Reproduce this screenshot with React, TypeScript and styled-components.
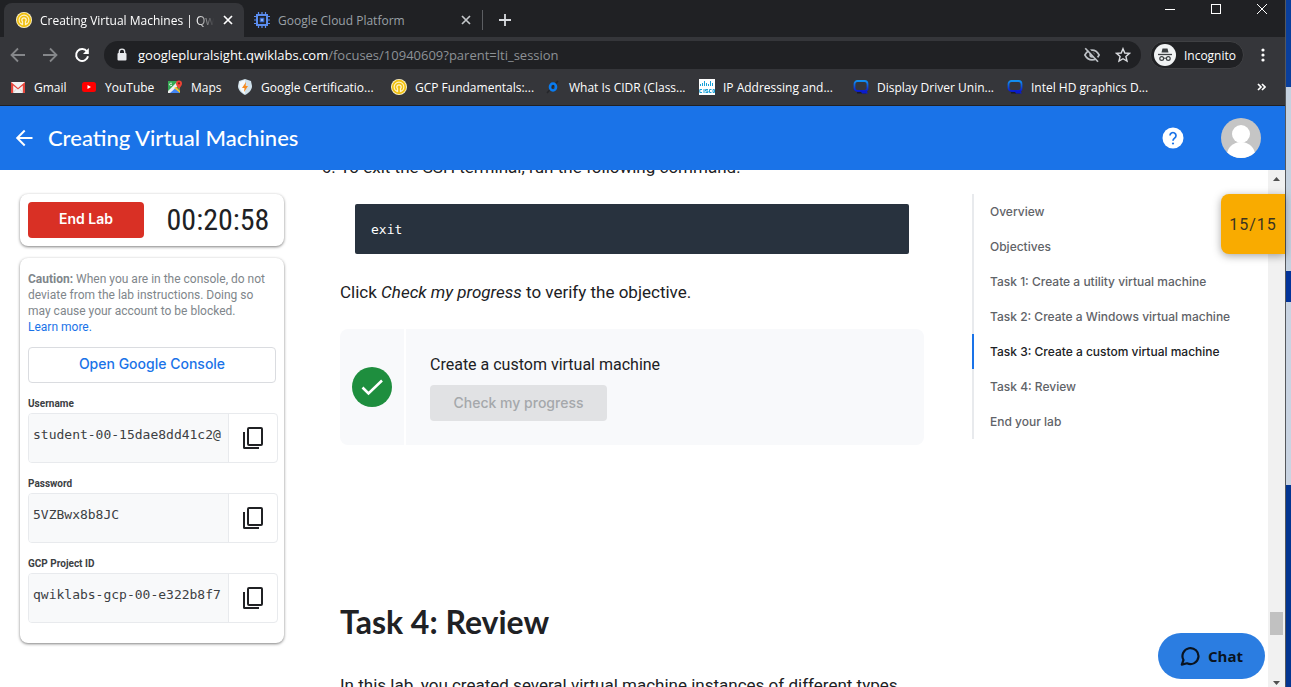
import React from "react";
import styled, { createGlobalStyle } from "styled-components";

const Global = createGlobalStyle`
  *{box-sizing:border-box}
  html,body{margin:0;height:100%;overflow:hidden}
  #root{height:100%}
  button{border:0;background:none;padding:0;font:inherit;color:inherit;display:flex;align-items:center;justify-content:center}
  a{color:inherit;text-decoration:none}
`;

const chromeFont = `"Open Sans","Noto Sans",sans-serif`;
const titleFont = `Lato,sans-serif`;
const labelFont = `Inter,sans-serif`;
const bodyFont = `Roboto,sans-serif`;

const Screen = styled.div`
  display: grid;
  grid-template-columns: minmax(0, 1fr) 6px;
  height: 100vh;
`;
const Desktop = styled.div`
  border-left: 1px solid #55585c;
  background: linear-gradient(#0a3f9c 87px, #c5d2e0 87px 271px, #03349a 271px 302px, #c9d4e2 302px 485px, #033591 485px);
`;
const Browser = styled.div`
  display: flex;
  flex-direction: column;
  min-height: 0;
  position: relative;
  background: #35363a;
  font-family: ${chromeFont};
  font-size: 12px;
  color: #fff;
`;
const TabStrip = styled.div`
  display: flex;
  background: #202124;
  height: 37px;
  padding: 3px 0 0 4px;
`;
const Tab = styled.div<{ $active?: boolean }>`
  display: flex;
  align-items: center;
  gap: 8px;
  width: ${(p) => (p.$active ? 240 : 238)}px;
  height: 34px;
  padding: 0 10px 0 ${(p) => (p.$active ? 12 : 10)}px;
  border-radius: 8px 8px 0 0;
  background: ${(p) => (p.$active ? "#35363a" : "transparent")};
  color: ${(p) => (p.$active ? "#fff" : "#9aa0a6")};
`;
const TabTitle = styled.span<{ $fade?: boolean }>`
  flex: 1;
  min-width: 0;
  overflow: hidden;
  white-space: nowrap;
  mask-image: ${(p) => (p.$fade ? "linear-gradient(90deg,#000 90%,transparent)" : "none")};
`;
const IconButton = styled.button`
  width: 12px;
  height: 34px;
`;
const NewTab = styled.button`
  && {
    width: 45px;
    height: 20px;
    margin-top: 7px;
    border-left: 1px solid #5c5e62;
  }
`;
const WindowButtons = styled.div`
  display: flex;
  margin: -3px 0 0 auto;
`;
const WindowButton = styled.button`
  width: 46px;
  height: 18px;
`;
const Toolbar = styled.div`
  display: flex;
  align-items: center;
  height: 36px;
  padding-right: 9px;
`;
const NavButton = styled.button`
  width: 32px;
  height: 28px;
  &:first-child { margin-left: 2px; }
`;
const Omnibox = styled.div`
  flex: 1;
  display: flex;
  align-items: center;
  gap: 14px;
  height: 28px;
  margin-left: 6px;
  padding: 0 10px 0 12px;
  border-radius: 14px;
  background: #202124;
  font-size: 13px;
`;
const Address = styled.span`
  flex: 1;
  margin-left: -4px;
  white-space: nowrap;
  span { color: #8d9196; }
`;
const Incognito = styled.button`
  && {
    gap: 8px;
    height: 28px;
    margin: 0 6px 0 9px;
    padding: 0 7px 0 3px;
    border: 1px solid #3f4043;
    border-radius: 14px;
    background: #202124;
  }
`;
const MenuButton = styled.button`
  width: 26px;
  height: 28px;
`;
const Bookmarks = styled.nav`
  display: flex;
  align-items: center;
  height: 33px;
  padding: 0 19px 4px 10px;
  border-bottom: 1px solid #202124;
`;
const Bookmark = styled.a<{ $w: number }>`
  display: flex;
  align-items: center;
  gap: 8px;
  width: ${(p) => p.$w}px;
  white-space: nowrap;
  svg { flex: none; }
`;
const More = styled.button`
  margin-left: auto;
`;

const Header = styled.header`
  display: flex;
  align-items: center;
  flex: none;
  height: 64px;
  padding: 0 24px 0 12px;
  background: #1a73e8;
  position: relative;
`;
const PageTitle = styled.h1`
  flex: 1;
  margin: 0 0 0 12px;
  font: 500 22px/28px ${titleFont};
`;
const HelpButton = styled.button`
  margin-right: 36px;
`;
const Viewport = styled.div`
  flex: 1;
  display: flex;
  min-height: 0;
  background: #fff;
`;
const Page = styled.div`
  flex: 1;
  display: grid;
  grid-template-columns: 264px minmax(0, 1fr) 280px;
  align-items: start;
  min-width: 0;
  overflow: hidden;
  padding: 24px 16px 0 20px;
  font-family: ${bodyFont};
  color: #202124;
`;
const Side = styled.aside`
  display: flex;
  flex-direction: column;
  gap: 12px;
`;
const Panel = styled.section`
  padding: 8px;
  border-radius: 8px;
  background: #fff;
  box-shadow: 0 1px 3px rgba(0, 0, 0, 0.5);
`;
const TimerPanel = styled(Panel)`
  display: flex;
  align-items: center;
  height: 52px;
`;
const EndLab = styled.button`
  && {
    width: 116px;
    height: 36px;
    padding-bottom: 2px;
    border-radius: 4px;
    background: #d93025;
    color: #fff;
    font: 600 14px/20px ${labelFont};
  }
`;
const Timer = styled.time`
  flex: 1;
  padding-left: 16px;
  text-align: center;
  font: 400 30px/36px "Liberation Sans Narrow", "Roboto Condensed", Roboto, sans-serif;
`;
const LabPanel = styled(Panel)`
  padding: 13px 8px 20px;
`;
const Caution = styled.p`
  margin: 0 0 12px;
  font-size: 12px;
  line-height: 16px;
  color: #80868b;
  a { display: block; color: #1a73e8; }
`;
const ConsoleButton = styled.button`
  && {
    width: 100%;
    height: 36px;
    margin-bottom: 13px;
    padding-bottom: 2px;
    border: 1px solid #dadce0;
    border-radius: 4px;
    color: #1a73e8;
    font: 500 14px/20px ${labelFont};
  }
`;
const Field = styled.div`
  width: 250px;
  & + & { margin-top: 13px; }
  label { display: block; height: 17px; font: 700 10px/16px ${bodyFont}; color: #3c4043; }
`;
const FieldBox = styled.div`
  display: flex;
  height: 50px;
  border: 1px solid #e8eaed;
  border-radius: 4px;
  overflow: hidden;
  input {
    flex: 1;
    min-width: 0;
    padding: 0 0 6px 4px;
    border: 0;
    border-right: 1px solid #e8eaed;
    background: #f8f9fa;
    color: #3c4043;
    font: 13px/20px "DejaVu Sans Mono", monospace;
  }
  button { width: 48px; }
`;

const Lesson = styled.main`
  margin: -40px 48px 0 56px;
  font-size: 17px;
  line-height: 26px;
  white-space: nowrap;
  p { margin: 0; }
`;
const Steps = styled.ol`
  margin: 0;
  padding: 0;
`;
const Code = styled.pre`
  height: 50px;
  margin: 24px 15px 25px;
  padding: 0 16px;
  border-radius: 2px;
  background: #28323e;
  color: #fff;
  font: 13px/52px "DejaVu Sans Mono", monospace;
`;
const Objective = styled.section`
  display: grid;
  grid-template-columns: 64px minmax(0, 1fr);
  gap: 2px;
  height: 116px;
  margin: 24px 0 159px;
  border-radius: 8px;
  overflow: hidden;
  font-size: 16px;
`;
const Status = styled.div`
  display: grid;
  place-items: center;
  background: #f8f9fb;
`;
const Check = styled.div`
  padding: 23px 24px;
  background: #f8f9fb;
  button {
    width: 177px;
    height: 36px;
    margin-top: 7px;
    border-radius: 4px;
    background: #e1e2e4;
    color: #a5a8ab;
    font: 500 14px/20px ${labelFont};
  }
`;
const Heading = styled.h2`
  margin: 0 0 32px;
  font: 700 32px/36px ${titleFont};
`;
const Toc = styled.nav`
  display: flex;
  flex-direction: column;
`;
const TocLink = styled.a<{ $active?: boolean }>`
  border-left: 2px solid ${(p) => (p.$active ? "#1a73e8" : "#e8eaed")};
  padding-left: 16px;
  font: 500 12px/35px ${labelFont};
  color: ${(p) => (p.$active ? "#202124" : "#5f6368")};
`;
const Scrollbar = styled.div`
  display: flex;
  flex-direction: column;
  align-items: center;
  justify-content: space-between;
  width: 17px;
  background: #f1f1f1;
`;
const ScrollEnd = styled.div`
  display: flex;
  flex-direction: column;
  align-items: center;
  gap: 42px;
`;
const Thumb = styled.div`
  width: 13px;
  height: 23px;
  background: #c1c1c1;
`;
const Score = styled.div`
  position: absolute;
  right: 0;
  top: 194px;
  width: 64px;
  height: 60px;
  border-radius: 8px 0 0 8px;
  background: #f9ab00;
  box-shadow: 0 2px 8px rgba(0, 0, 0, 0.35);
  color: #3c3420;
  font: 16px/62px ${bodyFont};
  letter-spacing: 1px;
  text-align: center;
`;
const Chat = styled.button`
  && {
    position: absolute;
    right: 20px;
    bottom: 8px;
    gap: 8px;
    width: 107px;
    height: 46px;
    border-radius: 23px;
    background: #2b7de1;
    color: #0a1420;
    font: 700 15px/20px ${chromeFont};
  }
`;

const Close = ({ c }: { c: string }) => (
  <svg width="10" height="10" viewBox="0 0 10 10" stroke={c} strokeWidth="1.7"><path d="M1 1l8 8M9 1L1 9" /></svg>
);
const QwikIcon = () => (
  <svg width="16" height="16" viewBox="0 0 16 16" fill="none">
    <circle cx="8" cy="8" r="8" fill="#fff3c8" />
    <circle cx="8" cy="8" r="6.3" stroke="#f0c010" strokeWidth="1.7" />
    <path d="M5.7 10.8A3.6 3.6 0 1 1 10.3 10.8" stroke="#f0c010" strokeWidth="1.5" />
    <path d="M8 7.5V14" stroke="#f0c010" strokeWidth="1.7" /><circle cx="8" cy="8" r="1.5" fill="#f0c010" />
  </svg>
);
const ChipIcon = () => (
  <svg width="16" height="16" viewBox="0 0 16 16" fill="none" stroke="#5b8def">
    <path d="M4.5 0v3M8 0v3M11.500 0v3M4.500 13v3M8 13v3M11.500 13v3M0 4.500h3M0 8h3M0 11.500h3M13 4.500h3M13 8h3M13 11.500h3" strokeWidth="1.2" />
    <rect x="3" y="3" width="10" height="10" strokeWidth="2" /><rect x="6.2" y="6.2" width="3.6" height="3.6" fill="#8ab4f8" stroke="#3367d6" />
  </svg>
);
const GmailIcon = () => (
  <svg width="16" height="16" viewBox="0 0 16 16"><path d="M1 3h14v11H1z" fill="#f2f2f2" /><path d="M1 14V3l7 6 7-6v11h-2.200V6.500L8 10.500 3.200 6.500V14z" fill="#e5443a" /><path d="M3 14l4-5M13 14L9 9" stroke="#ccc" strokeWidth=".7" /></svg>
);
const YoutubeIcon = () => (
  <svg width="16" height="16" viewBox="0 0 16 16"><rect x="1" y="3" width="14" height="10" rx="2.500" fill="#f00" /><path d="M6.500 6v4L10 8z" fill="#fff" /></svg>
);
const MapsIcon = () => (
  <svg width="16" height="16" viewBox="0 0 16 16">
    <path d="M1 2h12v12H1z" fill="#34a853" /><path d="M1 14l6-6 6 6z" fill="#4285f4" /><path d="M1 12L11 2h2v3L3 14H1z" fill="#eee" /><path d="M9 8l4 4v2L7 9z" fill="#fbc02d" />
    <path d="M12 11c-.4-3-3-3.600-3-6.500a3 3 0 0 1 6 0c0 2.900-2.600 3.500-3 6.500z" fill="#ea4335" /><circle cx="12" cy="4.300" r="1.100" fill="#7d1d17" />
    <path d="M5 4.800a1.300 1.300 0 1 0-.2 1.500H3.900" fill="none" stroke="#fff" strokeWidth=".8" />
  </svg>
);
const CertIcon = () => (
  <svg width="16" height="16" viewBox="0 0 16 16"><path d="M8 0l6 2 1 5c0 4-3 7-7 9-4-2-7-5-7-9l1-5z" fill="#cfe0ea" /><path d="M8 1v14c-3-2-5.500-4-5.500-8V3z" fill="#f5f9fb" /><path d="M9 3L5 9h2.500L7 13l4-6H8.600z" fill="#f68b1f" /></svg>
);
const CidrIcon = () => (
  <svg width="16" height="16" viewBox="0 0 16 16"><path d="M2 14L13 2" stroke="#25262a" strokeWidth="1.500" /><ellipse cx="8" cy="8" rx="3" ry="3.500" fill="none" stroke="#0a7cf0" strokeWidth="2.600" /></svg>
);
const CiscoIcon = () => (
  <svg width="16" height="16" viewBox="0 0 16 16" fill="none" stroke="#1ba0d7">
    <path d="M0 0h16v16H0z" fill="#fff" stroke="none" /><path d="M1.500 5v2M3.500 4v3M5.500 2v5M7.500 4v3M9.500 5v2M11.500 2v5M13.500 4v3" />
    <path d="M3 10.500H.8v3H3M5 10v4M9 10.500H6.500V12H9v1.500H6.500M12.500 10.500h-2v3h2M14 10.500h1.500v3H14z" />
  </svg>
);
const DriverIcon = () => (
  <svg width="16" height="16" viewBox="0 0 16 16" fill="none">
    <defs><linearGradient id="drv" x1="0" y1="0" x2="0" y2="1"><stop stopColor="#1290f0" /><stop offset="1" stopColor="#0a1ccc" /></linearGradient></defs>
    <path d="M4 13.800h9" stroke="#1b1c2a" strokeWidth="1.500" />
    <rect x="1.500" y="2" width="13" height="10" rx="3" stroke="url(#drv)" strokeWidth="1.800" /><path d="M8 11.500l1.500 2.300h4.200l-1-2.300" stroke="#0a1ccc" strokeWidth="1.500" />
  </svg>
);
const CopyIcon = () => (
  <svg width="22" height="24" viewBox="0 0 22 24" fill="none" stroke="#202124" strokeWidth="2"><rect x="6" y="2" width="14" height="17" rx="1" /><path d="M2 6v15.500q0 .5.500.5H17" /></svg>
);
const Arrow = ({ c, flip, size = 16 }: { c: string; flip?: boolean; size?: number }) => (
  <svg width={size} height={size} viewBox="0 0 16 16" fill="none" stroke={c} strokeWidth="1.800">
    <path d={flip ? "M1 8h13M8 1.500L14.500 8 8 14.500" : "M15 8H2M8 1.500L1.500 8 8 14.500"} />
  </svg>
);

const bookmarks: [string, number, React.FC][] = [
  ["Gmail", 71, GmailIcon],
  ["YouTube", 86, YoutubeIcon],
  ["Maps", 70, MapsIcon],
  ["Google Certificatio...", 154, CertIcon],
  ["GCP Fundamentals:...", 154, QwikIcon],
  ["What Is CIDR (Class...", 154, CidrIcon],
  ["IP Addressing and...", 154, CiscoIcon],
  ["Display Driver Unin...", 154, DriverIcon],
  ["Intel HD graphics D...", 154, DriverIcon],
];
const fields = [
  ["Username", "student-00-15dae8dd41c2@"],
  ["Password", "5VZBwx8b8JC"],
  ["GCP Project ID", "qwiklabs-gcp-00-e322b8f7"],
];
const sections = [
  "Overview",
  "Objectives",
  "Task 1: Create a utility virtual machine",
  "Task 2: Create a Windows virtual machine",
  "Task 3: Create a custom virtual machine",
  "Task 4: Review",
  "End your lab",
];

export default function App() {
  return (
    <Screen>
      <Global />
      <Browser>
        <TabStrip>
          <Tab $active>
            <QwikIcon />
            <TabTitle $fade>Creating Virtual Machines | Qwikl</TabTitle>
            <IconButton aria-label="Close tab"><Close c="#fff" /></IconButton>
          </Tab>
          <Tab>
            <ChipIcon />
            <TabTitle>Google Cloud Platform</TabTitle>
            <IconButton aria-label="Close tab"><Close c="#c4c7ca" /></IconButton>
          </Tab>
          <NewTab aria-label="New tab">
            <svg width="12" height="12" viewBox="0 0 12 12" stroke="#dadce0" strokeWidth="1.800"><path d="M6 0v12M0 6h12" /></svg>
          </NewTab>
          <WindowButtons>
            <WindowButton aria-label="Minimize"><svg width="10" height="10" stroke="#fff"><path d="M0 5.500h10" /></svg></WindowButton>
            <WindowButton aria-label="Maximize"><svg width="10" height="10" fill="none" stroke="#fff"><rect x=".5" y=".5" width="9" height="9" /></svg></WindowButton>
            <WindowButton aria-label="Close"><svg width="10" height="10" stroke="#fff"><path d="M0 0l10 10M10 0L0 10" /></svg></WindowButton>
          </WindowButtons>
        </TabStrip>
        <Toolbar>
          <NavButton aria-label="Back"><Arrow c="#85878a" /></NavButton>
          <NavButton aria-label="Forward"><Arrow c="#85878a" flip /></NavButton>
          <NavButton aria-label="Reload">
            <svg width="16" height="16" viewBox="0 0 16 16" fill="none" stroke="#fff" strokeWidth="2"><path d="M13 4.500A6 6 0 1 0 14 9.300" /><path d="M14.800 1v6H9z" fill="#fff" stroke="none" /></svg>
          </NavButton>
          <Omnibox>
            <svg width="12" height="14" viewBox="0 0 12 14"><path d="M3.300 6V3.800a2.700 2.700 0 0 1 5.400 0V6" fill="none" stroke="#e8eaed" strokeWidth="1.400" /><rect x="1.500" y="5" width="9" height="7.500" rx="1" fill="#e8eaed" /></svg>
            <Address>googlepluralsight.qwiklabs.com<span>/focuses/10940609?parent=lti_session</span></Address>
            <svg width="18" height="18" viewBox="0 0 24 24" fill="none" stroke="#bdc1c6" strokeWidth="2.200"><path d="M2.500 12Q6 5.500 12 5.500T21.500 12Q18 18.500 12 18.500T2.500 12z" /><circle cx="12" cy="12" r="3.600" fill="#bdc1c6" stroke="none" /><path d="M5 2l17 18" stroke="#202124" strokeWidth="3" /><path d="M3 3l17 18" /></svg>
            <svg width="16" height="16" viewBox="0 0 16 16" fill="none" stroke="#dadce0" strokeWidth="1.400"><path d="M8 1.700l1.800 4.300 4.700.4-3.600 3.100 1.100 4.600L8 11.700l-4 2.400 1.100-4.600L1.500 6.400l4.700-.4z" /></svg>
          </Omnibox>
          <Incognito>
            <svg width="22" height="22" viewBox="0 0 22 22" fill="none" stroke="#3c4043"><circle cx="11" cy="11" r="11" fill="#f1f3f4" stroke="none" /><path d="M7.500 8.500l1-4h5l1 4z" fill="#3c4043" stroke="none" /><path d="M4 10.500h14" strokeWidth="1.300" /><circle cx="7.700" cy="14.500" r="1.900" strokeWidth="1.200" /><circle cx="14.300" cy="14.500" r="1.900" strokeWidth="1.200" /><path d="M9.700 14.200h2.600" /></svg>
            Incognito
          </Incognito>
          <MenuButton aria-label="Menu"><svg width="4" height="14" viewBox="0 0 4 14" fill="#fff"><circle cx="2" cy="2" r="1.600" /><circle cx="2" cy="7" r="1.600" /><circle cx="2" cy="12" r="1.600" /></svg></MenuButton>
        </Toolbar>
        <Bookmarks>
          {bookmarks.map(([name, w, Icon]) => (
            <Bookmark key={name} href="#" $w={w}><Icon />{name}</Bookmark>
          ))}
          <More aria-label="More bookmarks"><svg width="9" height="8" viewBox="0 0 9 8" fill="none" stroke="#fff" strokeWidth="1.700"><path d="M1 1l3 3-3 3M5 1l3 3-3 3" /></svg></More>
        </Bookmarks>
        <Header>
          <button aria-label="Back to labs">
            <svg width="24" height="24" viewBox="0 0 24 24" fill="#fff"><path d="M20.500 10.900H7.700l5.700-5.700L12 3.800 3.800 12l8.200 8.200 1.400-1.400-5.700-5.700h12.800z" /></svg>
          </button>
          <PageTitle>Creating Virtual Machines</PageTitle>
          <HelpButton aria-label="Help">
            <svg width="24" height="24" viewBox="0 0 24 24"><circle cx="12" cy="12" r="10.500" fill="#fff" /><path d="M9 9.500a3 3 0 1 1 4.700 2.500c-1 .8-1.700 1.300-1.700 2.800" fill="none" stroke="#1a73e8" strokeWidth="1.700" /><circle cx="12" cy="17.500" r="1.100" fill="#1a73e8" /></svg>
          </HelpButton>
          <button aria-label="Account">
            <svg width="40" height="40" viewBox="0 0 40 40"><defs><clipPath id="av"><circle cx="20" cy="20" r="20" /></clipPath></defs><g clipPath="url(#av)"><path d="M0 0h40v40H0z" fill="#c5c5c5" /><circle cx="20" cy="16" r="9" fill="#fff" /><ellipse cx="20" cy="37" rx="14" ry="13" fill="#fff" /></g></svg>
          </button>
        </Header>
        <Viewport>
          <Page>
            <Side>
              <TimerPanel><EndLab>End Lab</EndLab><Timer>00:20:58</Timer></TimerPanel>
              <LabPanel>
                <Caution><b>Caution:</b> When you are in the console, do not deviate from the lab instructions. Doing so may cause your account to be blocked. <a href="#">Learn more.</a></Caution>
                <ConsoleButton>Open Google Console</ConsoleButton>
                {fields.map(([label, value], i) => (
                  <Field key={label}>
                    <label htmlFor={`field${i}`}>{label}</label>
                    <FieldBox><input id={`field${i}`} readOnly value={value} /><button aria-label={`Copy ${label}`}><CopyIcon /></button></FieldBox>
                  </Field>
                ))}
              </LabPanel>
            </Side>
            <Lesson>
              <Steps start={6}><li>To exit the SSH terminal, run the following command:</li></Steps>
              <Code>exit</Code>
              <p>Click <em>Check my progress</em> to verify the objective.</p>
              <Objective>
                <Status><svg width="40" height="40" viewBox="0 0 40 40" fill="none"><circle cx="20" cy="20" r="20" fill="#1e8e3e" /><path d="M10.500 20.500l6 6L30 13.500" stroke="#fff" strokeWidth="2.600" /></svg></Status>
                <Check><p>Create a custom virtual machine</p><button disabled>Check my progress</button></Check>
              </Objective>
              <Heading>Task 4: Review</Heading>
              <p>In this lab, you created several virtual machine instances of different types</p>
            </Lesson>
            <Toc>
              {sections.map((s, i) => <TocLink key={s} href="#" $active={i === 4}>{s}</TocLink>)}
            </Toc>
          </Page>
          <Scrollbar>
            <svg width="17" height="17" viewBox="0 0 17 17"><path d="M5 11h7L8.500 7z" fill="#505050" /></svg>
            <ScrollEnd><Thumb /><svg width="17" height="10" viewBox="0 0 17 10"><path d="M5 4h7L8.500 8z" fill="#505050" /></svg></ScrollEnd>
          </Scrollbar>
        </Viewport>
        <Score>15/15</Score>
        <Chat>
          <svg width="20" height="20" viewBox="0 0 20 20" fill="none" stroke="#0a1420" strokeWidth="2.200"><path d="M3.500 14A8 8 0 1 1 7 17.300L1.800 18.600z" strokeLinejoin="round" /></svg>
          Chat
        </Chat>
      </Browser>
      <Desktop />
    </Screen>
  );
}
